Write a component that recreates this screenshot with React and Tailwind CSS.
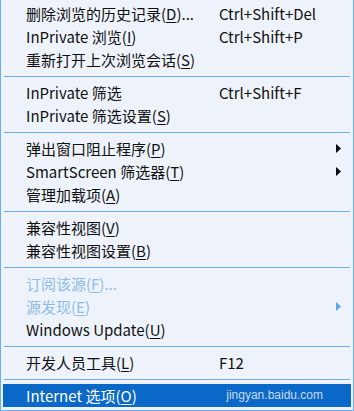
import React from "react";

const U = ({ children }) => <span className="underline underline-offset-2">{children}</span>;

const items = [
  { label: <>删除浏览的历史记录(<U>D</U>)...</>, key: "Ctrl+Shift+Del" },
  { label: <>InPrivate 浏览(<U>I</U>)</>, key: "Ctrl+Shift+P" },
  { label: <>重新打开上次浏览会话(<U>S</U>)</> },
  "sep",
  { label: <>InPrivate 筛选</>, key: "Ctrl+Shift+F" },
  { label: <>InPrivate 筛选设置(<U>S</U>)</> },
  "sep",
  { label: <>弹出窗口阻止程序(<U>P</U>)</>, arrow: true },
  { label: <>SmartScreen 筛选器(<U>T</U>)</>, arrow: true },
  { label: <>管理加载项(<U>A</U>)</> },
  "sep",
  { label: <>兼容性视图(<U>V</U>)</> },
  { label: <>兼容性视图设置(<U>B</U>)</> },
  "sep",
  { label: <>订阅该源(<U>F</U>)...</>, disabled: true },
  { label: <>源发现(<U>E</U>)</>, disabled: true, arrow: true },
  { label: <>Windows Update(<U>U</U>)</> },
  "sep",
  { label: <>开发人员工具(<U>L</U>)</>, key: "F12" },
  "sep",
  { label: <>Internet 选项(<U>O</U>)</>, active: true },
];

const Arrow = ({ color }) => (
  <svg width="5" height="9" viewBox="0 0 5 9" className="mr-[10px]">
    <path d="M0 0 L5 4.5 L0 9 Z" fill={color} />
  </svg>
);

export default function App() {
  return (
    <div
      className="w-[354px] h-[411px] bg-[#eef3fb] border-x border-b border-[#6aaef0] pt-[2px] px-[2px] text-[15px] leading-none"
      style={{ fontFamily: '"Noto Sans CJK SC", "Noto Sans", sans-serif' }}
    >
      {items.map((it, i) =>
        it === "sep" ? (
          <div key={i} className="h-[10px] flex items-center pl-[1px] pr-[1px]">
            <div className="h-px w-full bg-[#6aaef0]" />
          </div>
        ) : (
          <div
            key={i}
            className={`relative h-[23px] flex items-center pl-[23px] ${
              it.active ? "bg-[#0a68c8] text-white" : it.disabled ? "text-[#8dbcec]" : "text-[#101010]"
            }`}
          >
            <span className="w-[193px] shrink-0 whitespace-nowrap">{it.label}</span>
            {it.key && <span className="whitespace-nowrap">{it.key}</span>}
            {it.arrow && (
              <span className="ml-auto flex items-center">
                <Arrow color={it.disabled ? "#5ca8f2" : "#000"} />
              </span>
            )}
            {it.active && (
              <span
                className="absolute right-[28px] top-[5px] text-[12px] text-[#c9d9ee]"
                style={{ fontFamily: '"Liberation Sans", Arial, sans-serif' }}
              >
                jingyan.baidu.com
              </span>
            )}
          </div>
        )
      )}
    </div>
  );
}
